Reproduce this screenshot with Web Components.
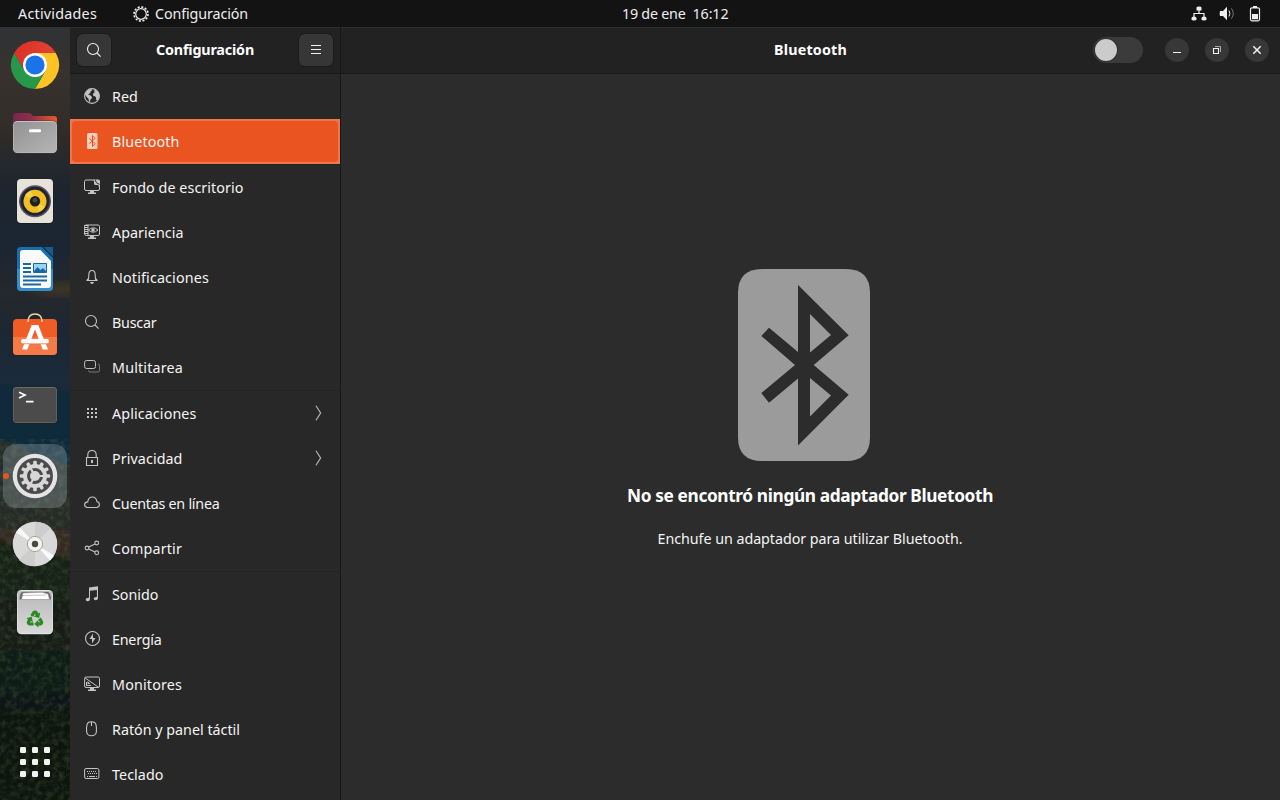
<!DOCTYPE html>
<html lang="es">
<head>
<meta charset="utf-8">
<title>Configuración</title>
<style>
  html, body { margin: 0; height: 100%; background: #131313; overflow: hidden; }
  body { font-family: "Noto Sans", "Open Sans", sans-serif; font-size: 14.3px; color: #f4f4f4; }
</style>
</head>
<body>
<gnome-desktop></gnome-desktop>
<script>
const STROKE = 'fill="none" stroke="currentColor"';
const ICONS = {
  gear: `<g ${STROKE}><circle cx="8" cy="8" r="5.3" stroke-width="1.2"/><circle cx="8" cy="8" r="7" stroke-width="1.6" stroke-dasharray="2.1 1.565"/></g>`,
  search: `<g ${STROKE} stroke-width="1.1"><circle cx="7" cy="7" r="5.5"/><path d="M11 11l3.6 3.6"/></g>`,
  menu: `<path ${STROKE} d="M3 3.5h10M3 7.5h10M3 11.5h10"/>`,
  net: `<circle cx="8" cy="8" r="7.4" fill="none" stroke="currentColor" stroke-width="1.1"/><path fill="currentColor" d="M2.500 3.500L6 1l2 .4-.4 1.500-1.400.8.2 1.200-1.500.8-.4 1.300 1.800.3 1.700 1.600-.3 1.700-1.400 1.200-.3 2.500-1-.8-.5-2.800-1.800-1.800L1 6.500zM10 2.500l1.500-.7L14 4l1.200 3-.3 3-1.500 2.400-1.200-.4-.2-2.600-1-1.200-1.600-.3-.5-1.900 1.200-1.600 1.400-.3-1.400-.6z"/>`,
  bluetooth: `<path fill="currentColor" d="M4.500 0h7.700Q13.500 0 13.500 1.500v13Q13.500 16 12.200 16H4.500Q3 16 3 14.500v-13Q3 0 4.500 0z"/><path d="M5.400 5.400l5.800 5.200L8.500 13.500v-11l2.700 2.900-5.800 5.200" fill="none" stroke="#e95420"/>`,
  wallpaper: `<path ${STROKE} d="M9.500 1H2Q.5 1 .5 2.500v7.500Q.5 11.500 2 11.500h12q1.500 0 1.500-1.500V6"/><path fill="currentColor" d="M9 .5h5.500Q16 .5 16 2v5.500h-1.500V6H11.500Q10 6 10 4.500V1.500H9zM6 12h4v1.500h2V15H4v-1.500h2z"/><path stroke="#282828" stroke-width=".9" fill="none" d="M11.200.8q.3 4 4.500 4.600"/>`,
  appearance: `<rect ${STROKE} x=".6" y="1" width="14.900" height="10.500" rx="1.500"/><path fill="currentColor" d="M0 1h4v1H0zM0 3h4v1H0zM0 5h4v1H0zM0 7h4v1H0zM0 9h4v1H0zM6 12h4v1.500h2V15H4v-1.500h2z"/><path ${STROKE} d="M4 1v10.500M4.500 6Q9 1.500 14 6 9 10.500 4.500 6"/><circle cx="9" cy="6" r="1.800" fill="currentColor"/>`,
  bell: `<path ${STROKE} stroke-width="1.100" d="M2.500 11.500h11M4 11.500Q4.800 10 4.800 6Q4.800 1.500 8 1.500t3.200 4.500Q11.200 10 12 11.500M2.500 11.500l1.800-2M13.500 11.500l-1.800-2"/><path fill="currentColor" d="M6 13h4q-.5 2-2 2t-2-2z"/>`,
  multi: `<rect ${STROKE} x=".6" y="1.500" width="10.900" height="8" rx="2"/><path ${STROKE} opacity=".5" d="M14 5h.3q1.200 0 1.200 1.500v5q0 1.500-1.500 1.500H6q-1.500 0-1.500-1.700"/>`,
  grid: `<path fill="currentColor" d="M3 3h2v2H3zM7 3h2v2H7zM11 3h2v2h-2zM3 7h2v2H3zM7 7h2v2H7zM11 7h2v2h-2zM3 11h2v2H3zM7 11h2v2H7zM11 11h2v2h-2z"/>`,
  lock: `<path ${STROKE} stroke-width="1.100" d="M2.500 7.500h11v8h-11zM3.800 7.500V4.700Q4 .5 8 .5t4.200 4.200v2.800"/><path fill="currentColor" d="M7 10h2v3H7z"/>`,
  cloud: `<path ${STROKE} stroke-width="1.100" d="M3.500 12.500Q.6 12.300.6 9.500.6 7.300 3.700 6.900 4.500 2 8.400 2q3.700 0 4.500 4.500 2.500.7 2.500 3.300 0 2.500-2.900 2.700z"/>`,
  share: `<g ${STROKE} stroke-width="1.100"><circle cx="3" cy="8" r="1.900"/><circle cx="12.700" cy="3" r="1.900"/><circle cx="12.700" cy="12.800" r="1.900"/><path d="M4.800 7.100l6.200-3.200M4.800 8.900l6.200 3.100"/></g>`,
  music: `<path fill="currentColor" d="M5 1.500L14 .2v11.800q0 2.300-2.200 2.300T9.600 12.500q.2-1.700 3.300-1.600V4L6 4.800v8.100q0 2.300-2.200 2.300t-2.200-1.800Q1.800 11.700 5 11.800z"/>`,
  power: `<circle cx="8.500" cy="7.500" r="7" ${STROKE} stroke-width="1.100"/><path fill="currentColor" d="M9 2.500L5.500 8H8v4.500L11.500 7H9z"/>`,
  displays: `<rect ${STROKE} x=".6" y="1" width="14.900" height="10.500" rx="1.500"/><path ${STROKE} d="M1 1.800l13.500 9.500"/><path fill="currentColor" d="M2 6h1v3h4v1H2zM3.500 5l3 3h-3zM6 12h4v1.500h2V15H4v-1.500h2z"/>`,
  mouse: `<path ${STROKE} stroke-width="1.100" d="M7.500.7q4 0 4.500 3 .8 4 .4 7-.5 4-4.900 4t-4.900-4q-.4-3 .4-7Q3.500.7 7.500.7zM7.500 1v4"/>`,
  keyboard: `<rect ${STROKE} x=".6" y="2.500" width="14.300" height="10" rx="1.500"/><path ${STROKE} stroke-dasharray="1 1" d="M3 5.500h10M4 7.500h9"/><path ${STROKE} d="M3 10.500h1M5 10.500h6M12 10.500h1"/>`,
  wired: `<path fill="currentColor" d="M5.500 1.500Q5.500.5 8 .5t2.500 1v3H5.500zM.500 12q0-1.500 2.500-1.500T5.500 12v1.500q0 1-2.500 1t-2.500-1zM10.500 12q0-1.500 2.500-1.500t2.500 1.500v1.500q0 1-2.500 1t-2.500-1z"/><path ${STROKE} stroke-width="1.200" d="M8 4v3.500M3 11V7.500h10V11"/>`,
  volume: `<path fill="currentColor" d="M1 5h3l4-4.300v13.600L4 10H1q-.6-2.500 0-5z"/><path ${STROKE} d="M10 4.500q1.800 3 0 6"/><path ${STROKE} opacity=".45" d="M12.300 2.300q4 5.200 0 10.400"/>`,
  battery: `<path ${STROKE} stroke-width="1.200" d="M5 1.800h6q1.500 0 1.500 1.500v10q0 1.500-1.500 1.500H5q-1.500 0-1.500-1.500v-10Q3.500 1.800 5 1.800z"/><path fill="currentColor" d="M6 0h4v2H6zM5 8h6v5.300H5z"/>`,
  min: `<path ${STROKE} d="M4 10.500h8"/>`,
  max: `<path ${STROKE} stroke-width="1.100" d="M4.500 6.500h5v5h-5z"/><path ${STROKE} opacity=".6" d="M6 4.500h5.500V10"/>`,
  close: `<path ${STROKE} stroke-width="1.500" d="M4.300 4.300l7.400 7.400M11.700 4.300l-7.400 7.400"/>`
};

const recycleArm = '<path d="M-4.600-4.200L-2.300-8Q-1.700-9 0-9T2.300-8L3.500-6l1.700-1-1 5.500-5.300-1.500 1.700-1.200L0-5.800-1.600-2.700z"/>';
const gearTeeth = Array.from({length: 12}, (_, i) => `<rect x="30.200" y="16.800" width="3.600" height="6" rx="1.200" transform="rotate(${i * 30} 32 32)"/>`).join('');
const APPS = {
  chrome: `<linearGradient id="r"><stop stop-color="#dc3128"/><stop offset="1" stop-color="#e34133"/></linearGradient><path fill="url(#r)" d="M11.200 20A24 24 0 0152.800 20H32L21.600 38z"/><path fill="#fdc225" d="M52.800 20A24 24 0 0132 56L42.400 38 32 20z"/><path fill="#27984a" d="M32 56A24 24 0 0111.200 20L21.600 38H42.400z"/><circle cx="32" cy="32" r="12" fill="#fff"/><circle cx="32" cy="32" r="9.600" fill="#1a73e8"/>`,
  files: `<linearGradient id="b"><stop stop-color="#74264f"/><stop offset=".45" stop-color="#93304a"/><stop offset="1" stop-color="#ea5a28"/></linearGradient><linearGradient id="f" x2="1" y2="1"><stop stop-color="#929292"/><stop offset="1" stop-color="#b5b5b5"/></linearGradient><path fill="url(#b)" d="M10 26V15q0-3 3-3h13q2 0 4 3h21q3 0 3 3v8z"/><rect x="9.500" y="19.500" width="45" height="33.500" rx="4.500" fill="#3b332f" opacity=".7"/><rect x="10" y="20" width="44" height="32" rx="4.500" fill="#c2c2c2"/><rect x="10.500" y="21" width="43" height="30.500" rx="4" fill="url(#f)"/><rect x="26" y="28.300" width="12" height="3" rx="1.300" fill="#fff"/>`,
  rhythm: `<rect x="13.500" y="10" width="37" height="45" rx="4.500" fill="#171b22"/><rect x="14" y="10" width="36" height="44" rx="4" fill="#e7e3d9"/><circle cx="32" cy="32.300" r="16" fill="#555663"/><circle cx="32" cy="32.300" r="14.500" fill="#222232"/><circle cx="32" cy="32.300" r="11.500" fill="#f1c022"/><path d="M32 32L22 26a12 12 0 016-4.500zM32 32l10 6a12 12 0 01-6 4.500z" fill="#f8d84f" opacity=".7"/><circle cx="32" cy="32.300" r="5.200" fill="#202020"/><circle cx="32" cy="31.300" r="2.300" fill="#474747"/>`,
  writer: `<path fill="#166fae" d="M18 10h21l11 11v29q0 4-4 4H18q-4 0-4-4V14q0-4 4-4z"/><path fill="#338ecb" d="M14 32h36v18q0 4-4 4H18q-4 0-4-4z"/><path fill="#fafafa" d="M20 13h17.500L48 24v24q0 3-3 3H20q-3 0-3-3V16q0-3 3-3z"/><path fill="#145c92" d="M40.500 10H50v9.500z"/><path stroke="#1768a5" stroke-width="1.800" d="M20 27h8M20 31h8M20 35h8M20 39.500h24M20 43.500h24M20 47.500h18"/><path fill="#9ad4f5" stroke="#1768a5" d="M30.500 26.500h13v9h-13z"/><path fill="#1768a5" d="M31 34l3.500-4 3 3 2.500-2 3 3v1H31z"/>`,
  store: `<rect x="9.500" y="14" width="45" height="37" rx="4.500" fill="#222" opacity=".6"/><rect x="10" y="14" width="44" height="36" rx="4" fill="#ef5c26"/><path fill="#f47a48" d="M10 32h44v14q0 4-4 4H14q-4 0-4-4z"/><path d="M25 17q0-8 7-8t7 8" fill="none" stroke="#f1d4a0" stroke-width="1.500"/><path fill="#fff" d="M28.700 20h6.600L45 44.500h-5.300L32 24.500l-7.700 20H19z"/><path fill="#e9602f" d="M19 38h26v1.200H19z"/><rect x="18" y="34" width="28" height="4.500" rx="2.200" fill="#fff"/>`,
  term: `<rect x="9.500" y="13.500" width="45" height="37.500" rx="4.500" fill="#222"/><rect x="10" y="14" width="44" height="36" rx="4" fill="#777"/><rect x="10.500" y="14.800" width="43" height="34.700" rx="3.500" fill="#4b4b4b"/><path d="M16 19.200l6 2.900-6 2.900M23 28.700h7.500" fill="none" stroke="#fff" stroke-width="1.700"/>`,
  settings: `<circle cx="32" cy="32" r="22.300" fill="#e4e4e4"/><circle cx="32" cy="32" r="18" fill="#4b4b4b"/><g fill="#d7d7d7">${gearTeeth}</g><circle cx="32" cy="32" r="10" fill="none" stroke="#d7d7d7" stroke-width="4"/><path d="M32 32h10M32 32l-5-8.700M32 32l-5 8.700" stroke="#d7d7d7" stroke-width="2.200"/><circle cx="32" cy="32" r="5" fill="#d7d7d7"/>`,
  disc: `<circle cx="32" cy="32" r="22.300" fill="#d9d9d9"/><path fill="#cdcdcd" d="M32 32V9.700A22.300 22.300 0 0148 16zM32 32v22.300A22.300 22.300 0 0116 48z"/><path fill="#fafafa" d="M32 32L13 20.500a22.300 22.300 0 014-5zM32 32l19 11.500a22.300 22.300 0 01-4 5z"/><circle cx="32" cy="32" r="7.600" fill="#f5f3ef" stroke="#aaa58f"/><circle cx="32" cy="32" r="3.200" fill="#48494a"/>`,
  trash: `<rect x="14" y="10" width="36" height="44.300" rx="4.500" fill="#e4e4e4"/><linearGradient id="t" x2="0" y2="1"><stop stop-color="#b9b9b9"/><stop offset="1" stop-color="#d8d8d8"/></linearGradient><rect x="14.700" y="11" width="34.600" height="42.300" rx="4" fill="url(#t)"/><path fill="#666" d="M19.500 12h25q3 0 3.500 7.500H16.500Q17 12 19.500 12z"/><path fill="#fff" stroke="#9b9b9b" stroke-width=".6" d="M20 13l19-.8 6 1.800 1.500 5.500h-28z"/><path stroke="#999" stroke-width=".6" d="M19 15.500l24-.5"/><g fill="#2b8a20" transform="translate(32 39.500)">${[0,120,240].map(a => `<g transform="rotate(${a})">${recycleArm}</g>`).join('')}</g>`,
  all: `<g fill="#f2f2f2">${[17,29,41].flatMap(y => [17,29,41].map(x => `<rect x="${x}" y="${y}" width="6" height="6" rx="1.200"/>`)).join('')}</g>`
};

const define = (name, render, after) => customElements.define(name, class extends HTMLElement {
  connectedCallback() {
    if (this.shadowRoot) return;
    this.attachShadow({ mode: 'open' }).innerHTML = render(this);
    if (after) after(this);
  }
});

define('sym-icon', el => `<style>:host{display:block;width:16px;height:16px;flex:none}svg{display:block}</style>
  <svg width="16" height="16" viewBox="0 0 16 16">${ICONS[el.getAttribute('name')]}</svg>`);

/* A one-line label whose tracking is adjusted to fill the given advance width. */
define('fit-label', el => `<style>:host{display:block;flex:none;white-space:pre;line-height:20px;width:${el.getAttribute('w')}px}span{display:inline-block}</style><span>${el.getAttribute('text')}</span>`,
  el => {
    const span = el.shadowRoot.querySelector('span');
    const gap = +el.getAttribute('w') - span.getBoundingClientRect().width;
    span.style.letterSpacing = (gap / el.getAttribute('text').length) + 'px';
  });

define('top-bar', () => `<style>
  :host{display:grid;grid-template-columns:622px auto 1fr;align-items:center;height:27px;background:#131313;color:#eee}
  .l{display:flex;align-items:center;padding-left:18px}.l sym-icon{margin:0 6px 0 36px}
  .c{display:flex;gap:7px}
  .r{display:flex;gap:12px;justify-content:flex-end;padding-right:17px}</style>
  <div class="l"><fit-label w="79" text="Actividades"></fit-label><sym-icon name="gear"></sym-icon><fit-label w="93" text="Configuración"></fit-label></div>
  <div class="c"><fit-label w="63.500" text="19 de ene"></fit-label><fit-label w="36" text="16:12"></fit-label></div>
  <div class="r"><sym-icon name="wired"></sym-icon><sym-icon name="volume"></sym-icon><sym-icon name="battery"></sym-icon></div>`);

define('dock-app', el => `<style>:host{display:block;height:68px;padding:2px 3px;box-sizing:border-box;position:relative}
  :host([active]) svg{background:rgba(160,175,178,.32);border-radius:13px}
  :host([active])::before{content:"";position:absolute;left:3px;top:31px;width:6px;height:6px;border-radius:50%;background:#e95420}
  svg{display:block}</style><svg width="64" height="64" viewBox="0 0 64 64">${APPS[el.getAttribute('app')]}</svg>`);

define('app-dock', () => `<style>
  :host{display:flex;flex-direction:column;width:70px;padding:4px 0;box-sizing:border-box;position:relative;overflow:hidden;
   background:linear-gradient(#303235 0,#37322d 45px,#332e29 90px,#2b2a2a 120px,#1d252f 165px,#1b2633 225px,#26282b 265px,#1d2733 300px,#1b2a3a 360px,#132b3b 374px,#102c3f 440px)}
  .wall{position:absolute;inset:0}
  .line{height:1px;margin:1px 11px;background:#4d5557}
  dock-app:last-child{margin-top:auto}</style>
  <svg class="wall" width="70" height="773"><filter id="n" x="0" y="0" width="1" height="1"><feTurbulence type="fractalNoise" baseFrequency=".17" numOctaves="4" seed="8"/><feColorMatrix values="0 0 0 0 .24  0 0 0 0 .33  0 0 0 0 .15  1.8 0 0 0 -.72"/></filter><filter id="s"><feGaussianBlur stdDeviation="9 4"/></filter><filter id="e"><feGaussianBlur stdDeviation="1.5"/></filter>
  <linearGradient id="h" x2="0" y2="1"><stop stop-color="#232c2c"/><stop offset=".55" stop-color="#262b28"/><stop offset="1" stop-color="#2b2820"/></linearGradient>
  <linearGradient id="g" x2="0" y2="1"><stop stop-color="#1a2412"/><stop offset=".3" stop-color="#131e13"/><stop offset=".6" stop-color="#0f1912"/><stop offset="1" stop-color="#0c120c"/></linearGradient>
  <ellipse cx="62" cy="262" rx="28" ry="7" fill="#594720" opacity=".45" filter="url(#s)"/><path d="M0 358q8-3 14 2 14 4 26 2l30 4v60H0z" fill="#0e2a3b"/>
  <path d="M0 412l14 4 16 9 20 6 20 7v110H0z" fill="url(#h)"/><path d="M-5 503h80v40H-5z" fill="#352b21" filter="url(#e)"/>
  <path d="M-5 512q20 4 40 12 20 5 40 8v245H-5z" fill="url(#g)" filter="url(#e)"/><path d="M0 412l14 4 16 9 20 6 20 7v335H0z" filter="url(#n)" opacity=".26"/></svg>
  ${['chrome','files','rhythm','writer','store','term'].map(a => `<dock-app app="${a}"></dock-app>`).join('')}
  <div class="line"></div>
  <dock-app app="settings" active></dock-app><dock-app app="disc"></dock-app><dock-app app="trash"></dock-app><dock-app app="all"></dock-app>`);

define('header-button', el => `<style>:host{display:grid;place-items:center;width:34px;height:32px;border-radius:6px;background:#363636;box-shadow:0 0 0 1px #1b1b1b;color:#f2f2f2}
  :host([round]){width:24px;height:24px;border-radius:50%;box-shadow:none;background:#373737}</style><sym-icon name="${el.getAttribute('icon')}"></sym-icon>`);

define('nav-row', el => `<style>
  :host{display:flex;align-items:center;height:45px;padding:0 18px 0 14px;box-sizing:border-box;flex:none}
  sym-icon{color:#c3c3c3;margin:0 12px 1px 0}
  :host([selected]){background:#ed764d;padding:2px}
  .fill{display:contents}
  :host([selected]) .fill{display:flex;align-items:center;flex:1;height:41px;padding-left:12px;border-radius:4px;background:#e95420}
  :host([selected]) sym-icon{color:#f9cdbc}
  .chev{margin:0 0 1px auto;color:#b5b5b5}</style>
  <div class="fill"><sym-icon name="${el.getAttribute('icon')}"></sym-icon><fit-label w="${el.getAttribute('w')}" text="${el.getAttribute('text')}"></fit-label>
  ${el.hasAttribute('more') ? '<svg class="chev" width="7" height="16" viewBox="0 0 7 16"><path d="M1 .7l4.600 7.300L1 15.300" fill="none" stroke="currentColor" stroke-width="1.200"/></svg>' : ''}</div>`);

const ROWS = [
  ['net','Red',26],['bluetooth','Bluetooth',67.5,'selected'],null,
  ['wallpaper','Fondo de escritorio',131.5],['appearance','Apariencia',71.5],['bell','Notificaciones',97],['search','Buscar',44.5],['multi','Multitarea',71],null,
  ['grid','Aplicaciones',84.5,'more'],['lock','Privacidad',70.5,'more'],['cloud','Cuentas en línea',107.5],['share','Compartir',70],null,
  ['music','Sonido',46.5],['power','Energía',49.5],['displays','Monitores',70],['mouse','Ratón y panel táctil',128],['keyboard','Teclado',51.5]
];
define('settings-sidebar', () => `<style>
  :host{display:flex;flex-direction:column;width:270px;border-right:1px solid #181818;background:#282828;overflow:hidden}
  header{display:flex;align-items:center;justify-content:space-between;flex:none;padding:0 7px 2px;box-sizing:border-box;background:#222;border-top:1px solid #2d2d2d;border-bottom:1px solid #181818;height:47px;font-weight:bold}
  header fit-label{color:#fff}.sep{height:1px;background:#232323;flex:none}</style>
  <header><header-button icon="search"></header-button><fit-label w="98" text="Configuración"></fit-label><header-button icon="menu"></header-button></header>
  ${ROWS.map(r => r ? `<nav-row icon="${r[0]}" text="${r[1]}" w="${r[2]}" ${r[3] || ''}></nav-row>` : '<div class="sep"></div>').join('')}`);

define('toggle-switch', () => `<style>:host{display:flex;align-items:center;width:50px;height:26px;border-radius:13px;background:#3b3b3b;padding:0 2px;box-sizing:border-box}i{width:22px;height:22px;border-radius:50%;background:#cbcbcb;box-shadow:0 0 0 1px #2f2f2f}</style><i></i>`);

define('bluetooth-panel', () => `<style>
  :host{display:flex;flex-direction:column;flex:1;background:#2c2c2c}
  header{display:grid;grid-template-columns:1fr auto 1fr;align-items:center;height:47px;padding-bottom:2px;box-sizing:border-box;background:#222;border-top:1px solid #2d2d2d;border-bottom:1px solid #181818;color:#fff;flex:none}
  header>fit-label{font-weight:bold}
  .tools{display:flex;align-items:center;justify-content:flex-end;gap:16px;padding-right:11px}
  toggle-switch{margin-right:6px}
  main{display:flex;flex-direction:column;align-items:center;padding:195px 1px 0 0}
  svg{display:block}.h{font-weight:bold;font-size:17.300px;margin-top:25px;color:#fff}.p{margin-top:23px}</style>
  <header><span></span><fit-label w="73" text="Bluetooth"></fit-label><div class="tools"><toggle-switch></toggle-switch><header-button round icon="min"></header-button><header-button round icon="max"></header-button><header-button round icon="close"></header-button></div></header>
  <main><svg width="192" height="192" viewBox="0 0 192 192"><path fill="#9b9b9b" d="M48 0H132Q156 0 156 24V168Q156 192 132 192H48Q24 192 24 168V24Q24 0 48 0z"/>
   <path fill="#2c2c2c" fill-rule="evenodd" d="M84 16L134.700 66.300 99.700 96 134.700 125.700 84 176.500V109.500L55 133.700 47.300 124 81 96 47.300 67 55 58.700 84 83zM96 45V83.500L117 66zM96 109V147.500L117 126.500z"/></svg>
   <fit-label class="h" w="366" text="No se encontró ningún adaptador Bluetooth"></fit-label>
   <fit-label class="p" w="305" text="Enchufe un adaptador para utilizar Bluetooth."></fit-label></main>`);

define('gnome-desktop', () => `<style>:host{display:flex;flex-direction:column;width:1280px;height:800px}.body{display:flex;flex:1;min-height:0}</style>
  <top-bar></top-bar><div class="body"><app-dock></app-dock><settings-sidebar></settings-sidebar><bluetooth-panel></bluetooth-panel></div>`);
</script>
</body>
</html>
